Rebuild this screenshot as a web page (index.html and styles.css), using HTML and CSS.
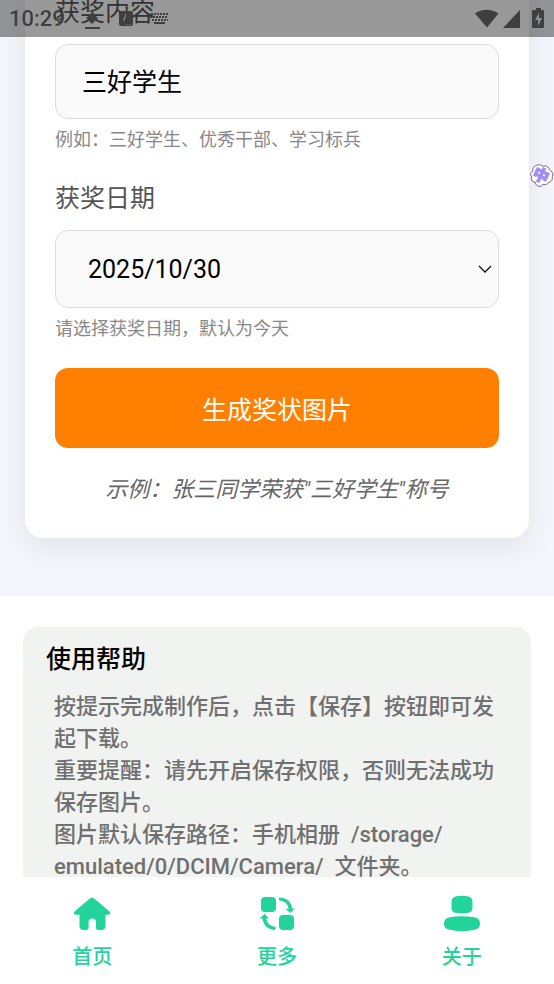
FILE: index.html
```html
<!DOCTYPE html>
<html lang="zh-CN">
<head>
<meta charset="utf-8">
<meta name="viewport" content="width=device-width, initial-scale=1">
<title>奖状生成</title>
<link rel="stylesheet" href="styles.css">
</head>
<body>
<div class="status-bar">
  <span class="status-time">10:29</span>
  <svg class="status-notices" width="84" height="26" viewBox="0 0 84 26" aria-hidden="true">
    <path d="M7 3v4l-6 5 6 6 6-6-6-5z"/>
    <path d="M0 21h15v2H0z"/>
    <path fill-rule="evenodd" d="M36 5h10a2 2 0 0 1 2 2v11a2 2 0 0 1-2 2H36a2 2 0 0 1-2-2V7a2 2 0 0 1 2-2zM40 8l-2 8h1l1-4h1v4h1l-1-8zM41 18h1v1h-1zM44 18h1v1h-1z"/>
    <path class="keys" d="M66 8h18M65 11h18M67 14h16"/>
    <path d="M69 16h11v2H69z"/>
  </svg>
  <svg class="status-system" width="70" height="22" viewBox="0 0 70 22" aria-hidden="true">
    <path d="M0 5.500C7 .5 16 .5 23.500 5.500L12 19.500z"/>
    <path d="M45 2v18H28z"/>
    <path fill-rule="evenodd" d="M61 0h5v2h2a1 1 0 0 1 1 1v16a1 1 0 0 1-1 1H58a1 1 0 0 1-1-1V3a1 1 0 0 1 1-1h3zM64 5l-4 7h3v6l4-8h-3z"/>
  </svg>
</div>

<main>
  <section class="maker">
    <form class="card">
      <label class="label" for="award">获奖内容</label>
      <input class="field" id="award" type="text" value="三好学生">
      <p class="hint">例如：三好学生、优秀干部、学习标兵</p>

      <label class="label" for="date">获奖日期</label>
      <div class="select-wrap">
        <select class="field field-date" id="date"><option>2025/10/30</option></select>
        <svg class="chevron" width="14" height="9" viewBox="0 0 14 9" aria-hidden="true"><path d="M1 1l6 6 6-6"/></svg>
      </div>
      <p class="hint">请选择获奖日期，默认为今天</p>

      <button class="submit" type="button">生成奖状图片</button>
      <p class="example">示例：张三同学荣获"三好学生"称号</p>
    </form>
  </section>

  <section class="help">
    <h2 class="help-title">使用帮助</h2>
    <div class="help-text">
      <p>按提示完成制作后，点击【保存】按钮即可发起下载。</p>
      <p>重要提醒：请先开启保存权限，否则无法成功保存图片。</p>
      <p>图片默认保存路径：手机相册&nbsp; /storage/<wbr>emulated/0/DCIM/Camera/&nbsp; 文件夹。</p>
    </div>
  </section>
</main>

<svg class="ime-badge" width="24" height="24" viewBox="0 0 24 24" role="img" aria-label="输入法">
  <path d="M8 1c2-.8 3.500 0 4.500 1.200 2.500-.8 5.500-.2 6.500 2.300.3 1 .8 1.800 1.800 2.500 2.300 1.500 2.500 3.500 1.500 5.500.5 3-.8 5.500-3.800 6-1 2-3 2.500-5.500 1.800-1 2.200-4.500 2.700-6.500.9-.8-.9-1-1.700-1.500-3.200-3 0-4.500-2.500-3-5C-.3 10.500.8 8.500 2.800 7 2.500 4 4.500 1.500 8 1z"/>
  <text x="11" y="17" transform="rotate(26 11 11)">中</text>
</svg>

<nav class="tabs">
  <a class="tab" href="#home">
    <svg width="38" height="38" viewBox="0 0 38 38" aria-hidden="true">
      <path d="M16.500 3.800q2.500-2 5 0L36.500 16.500q2 2.800-1.500 3.200h-2.500V31q0 4-4 4h-3q-2.500 0-2.500-2.500V27q0-3.500-3.700-3.500t-3.700 3.500v5.500q0 2.500-2.500 2.500H10.500q-4 0-4-4V19.700H3q-3.500-.4-1.500-3.200z"/>
    </svg>
    首页
  </a>
  <a class="tab" href="#more">
    <svg width="38" height="38" viewBox="0 0 38 38" aria-hidden="true">
      <rect x="3" y="2" width="15" height="15" rx="4"/>
      <rect x="21" y="20" width="15" height="15" rx="4"/>
      <path d="M21 2.500c7.500 0 12.500 4 13.300 11.200L37 13.300 32.500 18 27.500 14l3.200-.2C29.500 8.500 26.500 6 21 5.500z"/>
      <path d="M17.500 35C10 34.500 5.500 31 4.500 23.500L1.500 23.600 6.500 19l4.500 4.300-2.800.1c1 5 4 7.600 9.300 8.400z"/>
    </svg>
    更多
  </a>
  <a class="tab" href="#about">
    <svg width="38" height="38" viewBox="0 0 38 38" aria-hidden="true">
      <path d="M8.500 7q0-4.500 4-5.500 6.500-1.500 13 0 4 1 4 5.500v6q0 4-4 4.800-6.500 1.500-13 0-4-.8-4-4.800z"/>
      <path d="M1 28.500q0-4.500 4.500-6 13.500-2.500 27 0 4.500 1.500 4.500 6 0 5-4.500 6-13.500 3.500-27 0-4.500-1-4.500-6z"/>
    </svg>
    关于
  </a>
</nav>
</body>
</html>
```
FILE: styles.css
```css
* {
  box-sizing: border-box;
}

html {
  scrollbar-width: none;
}

body {
  margin: 0;
  background: #fff;
  font-family: Roboto, "Noto Sans CJK SC", sans-serif;
  font-weight: 400;
}

p,
h2 {
  margin: 0;
}

.status-bar {
  position: fixed;
  top: 0;
  left: 0;
  right: 0;
  z-index: 3;
  display: flex;
  align-items: center;
  height: 37px;
  padding: 0 9px;
  background: rgba(0, 0, 0, 0.4);
  color: #3f3f3f;
}

.status-time {
  font-size: 22px;
  font-weight: 500;
  line-height: 36px;
}

.status-bar svg {
  fill: #3f3f3f;
}

.status-notices {
  margin-left: 20px;
}

.status-notices .keys {
  stroke: #3f3f3f;
  stroke-width: 2;
  stroke-dasharray: 2 1;
}

.status-system {
  margin-left: auto;
}

.maker {
  overflow: hidden;
  padding: 0 25px 58px;
  background: #f5f6fb;
}

.card {
  display: flex;
  flex-direction: column;
  margin-top: -20px;
  padding: 18px 30px 32px;
  border-radius: 18px;
  background: #fff;
  box-shadow: 0 10px 30px rgba(0, 0, 0, 0.08);
}

.label {
  margin-bottom: 16px;
  color: #555;
  font-size: 25px;
  line-height: 30px;
}

.field {
  display: block;
  width: 100%;
  height: 75px;
  padding: 0 26px 3px;
  border: 1px solid #dcdcdc;
  border-radius: 13px;
  background: #fafafa;
  color: #000;
  font: inherit;
  font-size: 25px;
}

.select-wrap {
  position: relative;
}

.field-date {
  height: 78px;
  padding: 0 32px;
  appearance: none;
}

.chevron {
  position: absolute;
  top: 50%;
  right: 7px;
  margin-top: -4px;
  fill: none;
  stroke: #111;
  stroke-width: 1.3;
  pointer-events: none;
}

.hint {
  margin: 8px 0 31px;
  color: #888;
  font-size: 18px;
  line-height: 26px;
}

.submit {
  height: 80px;
  border: 0;
  border-radius: 13px;
  background: #ff8000;
  color: #fff;
  font: inherit;
  font-size: 25px;
}

.select-wrap + .hint {
  margin-bottom: 26px;
}

.example {
  margin-top: 26px;
  color: #666;
  font-size: 22px;
  font-style: italic;
  line-height: 32px;
  text-align: center;
}

.help {
  margin: 31px 23px 0;
  padding: 18px 31px 120px;
  border-radius: 15px;
  background: #f1f3f1;
}

.help-title {
  margin-left: -8px;
  font-size: 25px;
  font-weight: 500;
  line-height: 30px;
}

.help-text {
  margin-top: 16px;
  color: #707070;
  font-size: 22px;
  font-weight: 500;
  line-height: 32px;
}

.tabs {
  position: fixed;
  right: 0;
  bottom: 0;
  left: 0;
  z-index: 2;
  display: grid;
  grid-template-columns: repeat(3, 1fr);
  height: 107px;
  background: #fff;
}

.tab {
  display: flex;
  flex-direction: column;
  align-items: center;
  gap: 10px;
  padding-top: 18px;
  color: #22d49a;
  font-size: 20px;
  font-weight: 500;
  line-height: 28px;
  text-decoration: none;
}

.tab svg {
  fill: #22d49a;
}

.ime-badge {
  position: fixed;
  top: 164px;
  right: 0;
  z-index: 3;
}

.ime-badge path {
  fill: #fff;
  stroke: #6b6299;
  stroke-width: 1;
}

.ime-badge text {
  fill: #a08cf8;
  stroke: #a08cf8;
  stroke-width: 1;
  font-size: 16px;
  font-weight: 900;
  text-anchor: middle;
}
```
